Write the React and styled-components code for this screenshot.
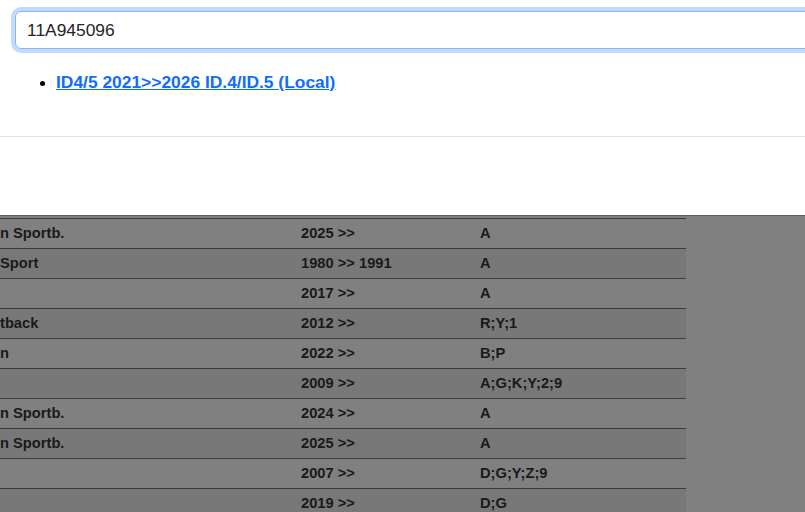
import React from 'react'
import styled, { createGlobalStyle } from 'styled-components'

const GlobalStyle = createGlobalStyle`
  html, body {
    margin: 0;
    padding: 0;
    background: #808080;
    overflow: hidden;
  }
  body {
    font-family: "Liberation Sans", Arial, sans-serif;
  }
`

// Modal panel (white, top part of the screen)
const Modal = styled.div`
  background: #ffffff;
  width: 100%;
  overflow: hidden;
  border-bottom: 1px solid #5e5e5e;
`

const ModalBody = styled.div`
  padding: 11px 0 0 15px;
  height: 125px;
  border-bottom: 1px solid #dee2e6;
`

const SearchInput = styled.input`
  display: block;
  box-sizing: border-box;
  width: 1000px;
  height: 38px;
  padding: 6px 11px;
  font-family: "Liberation Sans", Arial, sans-serif;
  font-size: 17.4px;
  color: #212529;
  background: #fff;
  border: 1px solid #86b7fe;
  border-radius: 6px;
  box-shadow: 0 0 0 4px #c3dafe;
  outline: none;
`

const ResultList = styled.ul`
  margin: 21px 0 0;
  padding-left: 41px;
  line-height: 24px;
`

const ResultLink = styled.a`
  color: #0d6efd;
  font-size: 17.4px;
  font-weight: bold;
  text-decoration: underline;
`

const ModalFooter = styled.div`
  height: 78px;
`

// Backdrop with the table behind the modal
const Backdrop = styled.div`
  background: #808080;
  padding-top: 2px;
`

const Table = styled.table`
  width: 686px;
  border-collapse: collapse;
  border-top: 1px solid #3c3c3c;
  font-size: 14.7px;
  font-weight: bold;
  color: #1a1a1a;
`

const Row = styled.tr`
  background: ${p => (p.$dark ? '#787878' : '#808080')};
`

const Cell = styled.td`
  padding: 4px 8px;
  line-height: 21px;
  border-bottom: 1px solid #3c3c3c;
  white-space: nowrap;
  width: ${p => p.$w}px;

  &:first-child {
    padding-left: 0;
  }
`

const rows = [
  ['n Sportb.', '2025 >>', 'A'],
  ['Sport', '1980 >> 1991', 'A'],
  ['', '2017 >>', 'A'],
  ['tback', '2012 >>', 'R;Y;1'],
  ['n', '2022 >>', 'B;P'],
  ['', '2009 >>', 'A;G;K;Y;2;9'],
  ['n Sportb.', '2024 >>', 'A'],
  ['n Sportb.', '2025 >>', 'A'],
  ['', '2007 >>', 'D;G;Y;Z;9'],
  ['', '2019 >>', 'D;G'],
]

const App = () => (
  <>
    <GlobalStyle />
    <Modal>
      <ModalBody>
        <SearchInput defaultValue="11A945096" />
        <ResultList>
          <li>
            <ResultLink href="#">ID4/5 2021&gt;&gt;2026 ID.4/ID.5 (Local)</ResultLink>
          </li>
        </ResultList>
      </ModalBody>
      <ModalFooter />
    </Modal>
    <Backdrop>
      <Table>
        <tbody>
          {rows.map((r, i) => (
            <Row key={i} $dark={i % 2 === 1}>
              <Cell $w={285}>{r[0]}</Cell>
              <Cell $w={163}>{r[1]}</Cell>
              <Cell>{r[2]}</Cell>
            </Row>
          ))}
        </tbody>
      </Table>
    </Backdrop>
  </>
)

export default App
